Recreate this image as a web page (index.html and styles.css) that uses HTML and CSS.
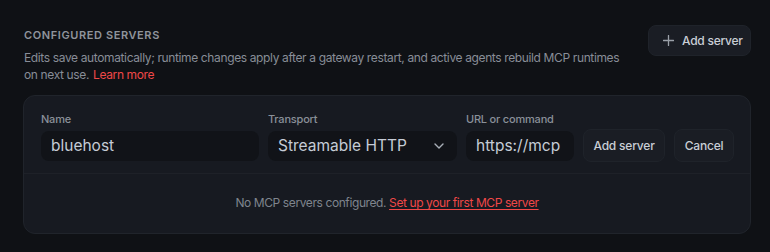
FILE: index.html
```html
<!DOCTYPE html>
<html lang="en">
<head>
<meta charset="utf-8">
<title>Configured servers</title>
<link rel="stylesheet" href="styles.css">
</head>
<body>
<div class="page">
  <div class="header">
    <div class="intro">
      <h2 class="title">CONFIGURED SERVERS</h2>
      <p class="desc">Edits save automatically; runtime changes apply after a gateway restart, and active agents rebuild MCP runtimes<br>on next use. <a class="link learn" href="#">Learn more</a></p>
    </div>
    <button class="btn btn-add" type="button">
      <svg class="plus" width="11" height="11" viewBox="0 0 11 11" aria-hidden="true"><path d="M5.5 0.5v10M0.5 5.5h10" stroke="currentColor" stroke-width="1.3" stroke-linecap="round"/></svg>
      <span>Add server</span>
    </button>
  </div>
  <div class="card">
    <div class="form">
      <label class="lbl lbl-name">Name</label>
      <label class="lbl lbl-transport">Transport</label>
      <label class="lbl lbl-url">URL or command</label>
      <div class="input">bluehost</div>
      <div class="input select"><span>Streamable HTTP</span>
        <svg class="chev" width="10" height="6" viewBox="0 0 10 6" aria-hidden="true"><path d="M1 1l4 4 4-4" fill="none" stroke="currentColor" stroke-width="1.4" stroke-linecap="round" stroke-linejoin="round"/></svg>
      </div>
      <div class="input url">https://mcp</div>
      <button class="btn btn-sm" type="button">Add server</button>
      <button class="btn btn-sm" type="button">Cancel</button>
    </div>
    <div class="empty">No MCP servers configured. <a class="link ul" href="#">Set up your first MCP server</a></div>
  </div>
</div>
</body>
</html>
```
FILE: styles.css
```css
* { box-sizing: border-box; }
html, body { margin: 0; padding: 0; }
body {
  background: #0f1115;
  font-family: Inter, "Noto Sans", sans-serif;
  color: #c7ccd4;
  width: 770px;
  height: 252px;
  overflow: hidden;
}
.page {
  padding: 25px 19px 0 23px;
}
.header {
  display: flex;
  justify-content: space-between;
  align-items: flex-start;
}
.intro { width: 610px; padding-left: 1px; }
.title {
  margin: 3px 0 0 0;
  font-size: 11px;
  font-weight: 600;
  letter-spacing: 0.6px;
  color: #8f949c;
  line-height: 15px;
}
.desc {
  margin: 6px 0 0 0;
  font-size: 12px;
  letter-spacing: -0.37px;
  line-height: 17px;
  color: #888d97;
}
.link { color: #f04848; text-decoration: none; }
.learn { margin-left: 1px; }
.link.ul { text-decoration: underline; text-underline-offset: 2px; }
.btn {
  font-family: inherit;
  background: #1a1d24;
  border: 1px solid #1f232a;
  color: #c9ced6;
  border-radius: 8px;
  cursor: pointer;
  white-space: nowrap;
}
.btn-add {
  display: flex;
  align-items: center;
  gap: 8px;
  height: 31px;
  width: 103px;
  padding: 0 0 0 14px;
  font-size: 12px;
  letter-spacing: -0.25px;
  font-weight: 500;
}
.plus { color: #9aa0a8; }
.card {
  margin-top: 12px;
  background: #171a21;
  border: 1px solid #20242b;
  border-radius: 12px;
  height: 139px;
}
.form {
  display: grid;
  grid-template-columns: 218px 189px 108px 82px 60px;
  grid-template-rows: 14px 33px;
  column-gap: 9px;
  row-gap: 3px;
  align-items: center;
  padding: 16px 16px 11px 17px;
  border-bottom: 1px solid #1e2128;
}
.lbl {
  font-size: 11px;
  font-weight: 500;
  letter-spacing: -0.2px;
  color: #8a9099;
  line-height: 14px;
  grid-row: 1;
}
.lbl-name { grid-column: 1; }
.lbl-transport { grid-column: 2; }
.lbl-url { grid-column: 3; }
.input {
  grid-row: 2;
  height: 30px;
  background: #111318;
  border-radius: 8px;
  font-size: 15.5px;
  color: #c5ccd6;
  padding: 0 10px;
  display: flex;
  align-items: center;
  white-space: nowrap;
  overflow: hidden;
}
.select { justify-content: space-between; padding-right: 13px; }
.chev { color: #a9afb8; }
.btn-sm {
  grid-row: 2;
  height: 33px;
  font-size: 12px;
  letter-spacing: -0.2px;
  font-weight: 500;
  padding: 0;
}
.empty {
  text-align: center;
  font-size: 12px;
  letter-spacing: -0.4px;
  line-height: 18px;
  padding: 20px 0;
  color: #7f858e;
}
```
